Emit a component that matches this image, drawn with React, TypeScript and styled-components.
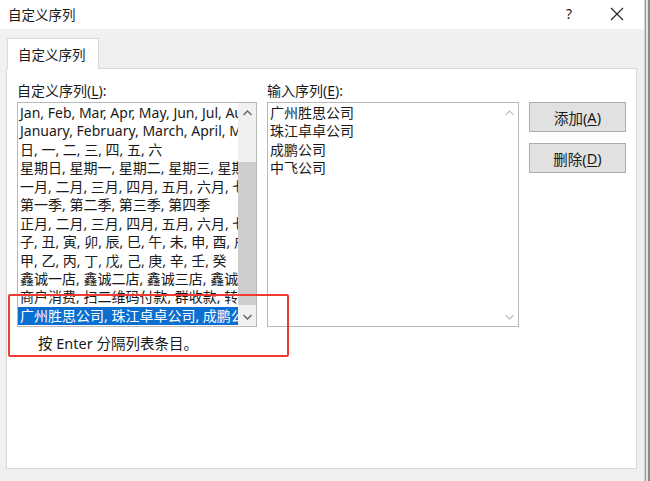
import React from "react";
import styled, { createGlobalStyle } from "styled-components";

const GlobalStyle = createGlobalStyle`
  html, body {
    margin: 0;
    padding: 0;
    background: #f0f0f0;
  }
  body {
    font-family: "Noto Sans", "Noto Sans CJK SC", sans-serif;
    font-size: 14px;
    color: #1a1a1a;
  }
`;

const customLists = [
  "Jan, Feb, Mar, Apr, May, Jun, Jul, Aug, Sep, Oct, Nov, Dec",
  "January, February, March, April, May, June, July, August",
  "日, 一, 二, 三, 四, 五, 六",
  "星期日, 星期一, 星期二, 星期三, 星期四, 星期五, 星期六",
  "一月, 二月, 三月, 四月, 五月, 六月, 七月, 八月",
  "第一季, 第二季, 第三季, 第四季",
  "正月, 二月, 三月, 四月, 五月, 六月, 七月, 八月",
  "子, 丑, 寅, 卯, 辰, 巳, 午, 未, 申, 酉, 戌, 亥",
  "甲, 乙, 丙, 丁, 戊, 己, 庚, 辛, 壬, 癸",
  "鑫诚一店, 鑫诚二店, 鑫诚三店, 鑫诚四店",
  "商户消费, 扫二维码付款, 群收款, 转账",
  "广州胜思公司, 珠江卓卓公司, 成鹏公司, 中飞公司",
];

const entries = ["广州胜思公司", "珠江卓卓公司", "成鹏公司", "中飞公司"];

function ArrowUp({ color }: { color: string }) {
  return (
    <svg width="9" height="6" viewBox="0 0 9 6">
      <path d="M0.5 5 L4.5 1 L8.5 5" fill="none" stroke={color} strokeWidth="1.3" />
    </svg>
  );
}

function ArrowDown({ color }: { color: string }) {
  return (
    <svg width="9" height="6" viewBox="0 0 9 6">
      <path d="M0.5 1 L4.5 5 L8.5 1" fill="none" stroke={color} strokeWidth="1.3" />
    </svg>
  );
}

export default function App() {
  return (
    <>
      <GlobalStyle />
      <Screen>
        <Dialog>
          <TitleBar>
            <Title>自定义序列</Title>
            <TitleButtons>
              <HelpMark>?</HelpMark>
              <svg width="14" height="14" viewBox="0 0 14 14">
                <path d="M1 1 L13 13 M13 1 L1 13" stroke="#222" strokeWidth="1.1" />
              </svg>
            </TitleButtons>
          </TitleBar>
          <Body>
            <TabStrip>
              <Tab>自定义序列</Tab>
            </TabStrip>
            <Panel>
              <Columns>
                <Column $width={240}>
                  <Label>
                    自定义序列(<u>L</u>):
                  </Label>
                  <ListBox>
                    <Rows>
                      {customLists.map((row, i) => (
                        <Row key={i} $selected={i === customLists.length - 1}>
                          {row}
                        </Row>
                      ))}
                    </Rows>
                    <ScrollBar>
                      <ScrollArrow>
                        <ArrowUp color="#606060" />
                      </ScrollArrow>
                      <Track>
                        <Thumb style={{ marginTop: 40, height: 143 }} />
                      </Track>
                      <ScrollArrow>
                        <ArrowDown color="#606060" />
                      </ScrollArrow>
                    </ScrollBar>
                  </ListBox>
                  <Hint>按 Enter 分隔列表条目。</Hint>
                </Column>
                <Column $width={252}>
                  <Label>
                    输入序列(<u>E</u>):
                  </Label>
                  <ListBox>
                    <Rows>
                      {entries.map((e) => (
                        <Row key={e}>{e}</Row>
                      ))}
                    </Rows>
                    <ScrollBar $disabled>
                      <ScrollArrow>
                        <ArrowUp color="#c4c4c4" />
                      </ScrollArrow>
                      <Track />
                      <ScrollArrow>
                        <ArrowDown color="#c4c4c4" />
                      </ScrollArrow>
                    </ScrollBar>
                  </ListBox>
                </Column>
                <Buttons>
                  <Button>
                    添加(<u>A</u>)
                  </Button>
                  <Button>
                    删除(<u>D</u>)
                  </Button>
                </Buttons>
              </Columns>
              <Annotation />
            </Panel>
          </Body>
        </Dialog>
        <Behind />
      </Screen>
    </>
  );
}

const Screen = styled.div`
  display: flex;
  width: 650px;
  height: 481px;
  overflow: hidden;
`;

const Dialog = styled.div`
  width: 644px;
  display: flex;
  flex-direction: column;
  background: #f0f0f0;
  border-right: 1px solid #d4d4d4;
`;

const Behind = styled.div`
  flex: 1;
  background: linear-gradient(90deg, #9a9a9a 0, #9a9a9a 1px, #e4e4e4 1px, #e4e4e4 3px, #8a8a8a 3px);
`;

const TitleBar = styled.div`
  height: 29px;
  background: #ffffff;
  display: flex;
  align-items: center;
  justify-content: space-between;
  padding: 0 20px 2px 8px;
  box-sizing: border-box;
`;

const Title = styled.div`
  font-size: 13.5px;
  color: #1a1a1a;
`;

const TitleButtons = styled.div`
  display: flex;
  align-items: center;
  gap: 38px;
`;

const HelpMark = styled.span`
  font-size: 14px;
  color: #222;
`;

const Body = styled.div`
  flex: 1;
  display: flex;
  flex-direction: column;
  padding: 9px 7px 12px 6px;
`;

const TabStrip = styled.div`
  display: flex;
  padding-left: 1px;
  margin-bottom: -1px;
  position: relative;
  z-index: 1;
`;

const Tab = styled.div`
  width: 92px;
  height: 31px;
  box-sizing: border-box;
  background: #ffffff;
  border: 1px solid #d9d9d9;
  border-bottom: none;
  padding-left: 10px;
  display: flex;
  align-items: center;
  font-size: 13.5px;
`;

const Panel = styled.div`
  flex: 1;
  position: relative;
  background: #ffffff;
  border: 1px solid #d9d9d9;
  padding: 13px 10px 0 10px;
`;

const Columns = styled.div`
  display: flex;
  gap: 10px;
`;

const Column = styled.div<{ $width: number }>`
  width: ${(p) => p.$width}px;
  display: flex;
  flex-direction: column;
`;

const Label = styled.div`
  height: 20px;
  line-height: 18px;
  font-size: 14px;
  color: #1a1a1a;
  u {
    text-underline-offset: 2px;
  }
`;

const ListBox = styled.div`
  height: 225px;
  box-sizing: border-box;
  border: 1px solid #b9b9b9;
  display: flex;
  background: #ffffff;
`;

const Rows = styled.div`
  flex: 1;
  min-width: 0;
  overflow: hidden;
  padding-top: 1px;
`;

const Row = styled.div<{ $selected?: boolean }>`
  height: 18.45px;
  line-height: 18.45px;
  padding-left: 2px;
  white-space: nowrap;
  overflow: hidden;
  font-size: 14px;
  color: ${(p) => (p.$selected ? "#ffffff" : "#1a1a1a")};
  background: ${(p) => (p.$selected ? "#0a6fd1" : "transparent")};
`;

const ScrollBar = styled.div<{ $disabled?: boolean }>`
  width: 18px;
  display: flex;
  flex-direction: column;
  background: ${(p) => (p.$disabled ? "#ffffff" : "#f0f0f0")};
`;

const ScrollArrow = styled.div`
  height: 18px;
  display: flex;
  align-items: center;
  justify-content: center;
  padding-top: 1px;
`;

const Track = styled.div`
  flex: 1;
  display: flex;
  flex-direction: column;
`;

const Thumb = styled.div`
  width: 18px;
  background: #cdcdcd;
`;

const Hint = styled.div`
  margin-top: 5px;
  padding-left: 21px;
  font-size: 14.5px;
  color: #1a1a1a;
`;

const Buttons = styled.div`
  padding-top: 20px;
  display: flex;
  flex-direction: column;
  gap: 11px;
`;

const Button = styled.div`
  width: 97px;
  height: 30px;
  box-sizing: border-box;
  background: #e1e1e1;
  border: 1px solid #adadad;
  display: flex;
  align-items: center;
  justify-content: center;
  font-size: 14.5px;
  color: #1a1a1a;
  u {
    text-underline-offset: 2px;
  }
`;

const Annotation = styled.div`
  position: absolute;
  left: 1px;
  top: 225px;
  width: 281px;
  height: 63px;
  box-sizing: border-box;
  border: 2px solid #ee3b34;
  border-radius: 2px;
  pointer-events: none;
`;
